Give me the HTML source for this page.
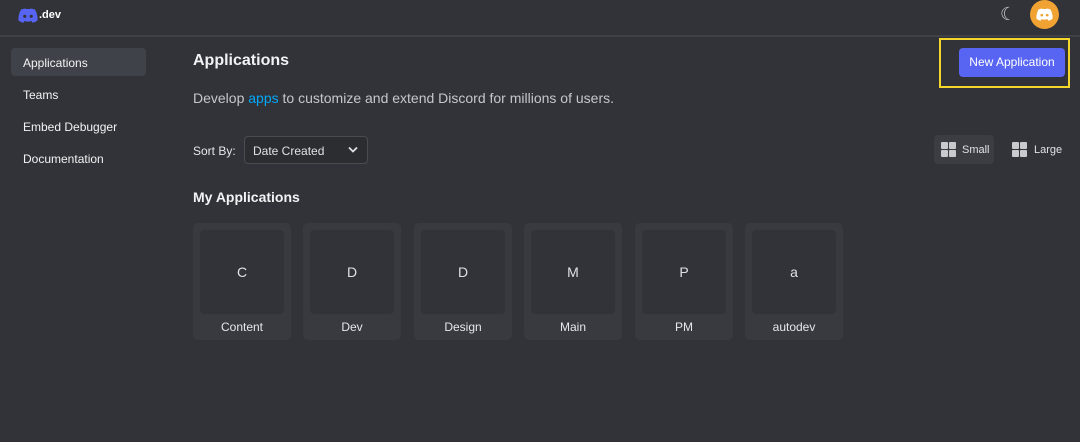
<!DOCTYPE html>
<html><head><style>
*{margin:0;padding:0;box-sizing:border-box}
body{width:1080px;height:442px;background:#313338;font-family:"Liberation Sans",sans-serif;color:#dbdee1;position:relative;overflow:hidden}
.abs{position:absolute}
.hdr{left:0;top:0;width:1080px;height:37px;border-bottom:2px solid #3f4147}
.nav{left:11px;width:135px;height:28px;font-size:12px;color:#f2f3f5;padding:8px 12px;border-radius:4px}
.card{top:223px;width:98px;height:117px;background:#393a40;border-radius:5px}
.card .in{position:absolute;left:7px;top:7px;width:84px;height:84px;background:#323338;border-radius:4px;text-align:center;line-height:84px;font-size:14px;color:#e0e1e5}
.card .n{position:absolute;left:0;width:98px;top:97px;text-align:center;font-size:12px;color:#e6e7ea}
.grid{display:inline-block;width:15px;height:15px;position:relative}
.grid i{position:absolute;width:7px;height:7px;background:#c8cace;border-radius:1px}
</style></head><body>
<div class="abs hdr"></div>
<svg class="abs" style="left:18px;top:8px" width="20" height="15" viewBox="0 0 20 15"><path d="M3 1.5Q7 0 8.5 1L11.5 1Q13 0 17 1.5Q20 7 19.5 12.5Q17 14.5 14.5 14.8L13.5 13Q11.5 13.6 10 13.6Q8.5 13.6 6.5 13L5.5 14.8Q3 14.5.5 12.5Q0 7 3 1.5Z" fill="#5865f2"/><circle cx="6.8" cy="8.3" r="1.6" fill="#313338"/><circle cx="13.2" cy="8.3" r="1.6" fill="#313338"/></svg>
<div class="abs" style="left:39px;top:9px;font-size:11px;font-weight:bold;color:#fff">.dev</div>
<div class="abs" style="left:1000px;top:4px;font-size:18px;color:#c8cace">☾</div>
<div class="abs" style="left:1030px;top:0px;width:29px;height:29px;border-radius:50%;background:#f0a232"></div>
<svg class="abs" style="left:1036px;top:8px" width="17" height="13" viewBox="0 0 20 15"><path d="M3 1.5Q7 0 8.5 1L11.5 1Q13 0 17 1.5Q20 7 19.5 12.5Q17 14.5 14.5 14.8L13.5 13Q11.5 13.6 10 13.6Q8.5 13.6 6.5 13L5.5 14.8Q3 14.5.5 12.5Q0 7 3 1.5Z" fill="#fff"/><circle cx="6.8" cy="8.3" r="1.6" fill="#f0a232"/><circle cx="13.2" cy="8.3" r="1.6" fill="#f0a232"/></svg>
<div class="abs nav" style="top:48px;background:#404249">Applications</div>
<div class="abs nav" style="top:80px">Teams</div>
<div class="abs nav" style="top:112px">Embed Debugger</div>
<div class="abs nav" style="top:144px">Documentation</div>
<div class="abs" style="left:193px;top:52px;font-size:16px;font-weight:bold;color:#f2f3f5">Applications</div>
<div class="abs" style="left:193px;top:90px;font-size:14px;color:#c4c7cc">Develop <span style="color:#00a8fc">apps</span> to customize and extend Discord for millions of users.</div>
<div class="abs" style="left:939px;top:38px;width:131px;height:50px;border:2px solid #f5d62a"></div>
<div class="abs" style="left:959px;top:48px;width:106px;height:29px;background:#5865f2;border-radius:4px;color:#fff;font-size:12px;text-align:center;line-height:29px">New Application</div>
<div class="abs" style="left:193px;top:144px;font-size:12px;color:#e6e7ea">Sort By:</div>
<div class="abs" style="left:244px;top:136px;width:124px;height:28px;background:#2b2d31;border:1px solid #4a4c52;border-radius:4px;font-size:12px;color:#e0e1e5;padding:7px 8px">Date Created<svg style="position:absolute;right:9px;top:9px" width="10" height="7" viewBox="0 0 10 7"><path d="M1 1.5L5 5.5L9 1.5" stroke="#e0e1e5" stroke-width="1.8" fill="none"/></svg></div>
<div class="abs" style="left:934px;top:135px;width:60px;height:29px;background:#3c3d43;border-radius:4px"></div>
<div class="abs" style="left:941px;top:142px"><span class="grid"><i style="left:0;top:0"></i><i style="left:8px;top:0"></i><i style="left:0;top:8px"></i><i style="left:8px;top:8px"></i></span></div>
<div class="abs" style="left:962px;top:144px;font-size:11px;color:#e0e1e5">Small</div>
<div class="abs" style="left:1012px;top:142px"><span class="grid"><i style="left:0;top:0"></i><i style="left:8px;top:0"></i><i style="left:0;top:8px"></i><i style="left:8px;top:8px"></i></span></div>
<div class="abs" style="left:1034px;top:144px;font-size:11px;color:#e0e1e5">Large</div>
<div class="abs" style="left:193px;top:189px;font-size:14px;font-weight:bold;color:#f2f3f5">My Applications</div>
<div class="abs card" style="left:193px"><div class="in">C</div><div class="n">Content</div></div>
<div class="abs card" style="left:303px"><div class="in">D</div><div class="n">Dev</div></div>
<div class="abs card" style="left:414px"><div class="in">D</div><div class="n">Design</div></div>
<div class="abs card" style="left:524px"><div class="in">M</div><div class="n">Main</div></div>
<div class="abs card" style="left:635px"><div class="in">P</div><div class="n">PM</div></div>
<div class="abs card" style="left:745px"><div class="in">a</div><div class="n">autodev</div></div>
</body></html>
